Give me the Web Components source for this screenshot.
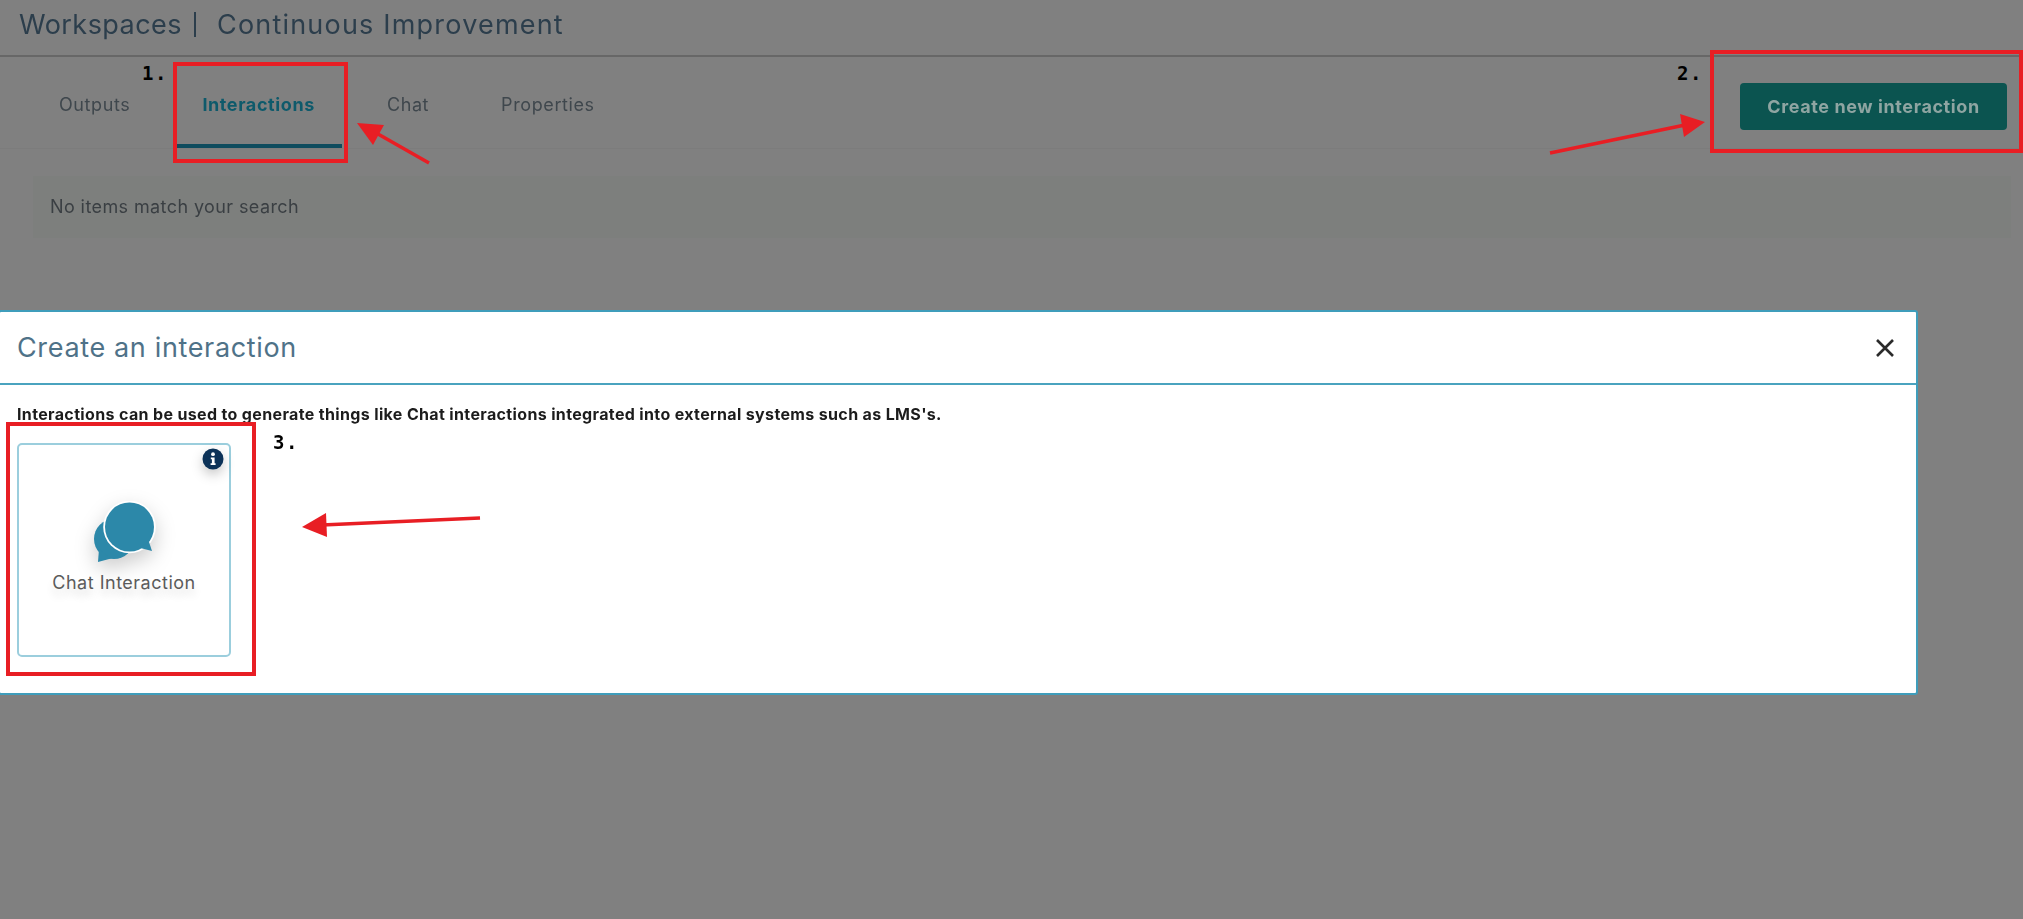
<!DOCTYPE html>
<html>
<head>
<meta charset="utf-8">
<title>Create an interaction</title>
<style>
  html, body { margin: 0; height: 100%; }
  body { background: #808080; overflow: hidden; font-family: Inter, "Open Sans", sans-serif; position: relative; }
</style>
</head>
<body>
<workspace-page>
  <workspace-header section="Workspaces" name="Continuous Improvement"></workspace-header>
  <tab-bar>
    <tab-item>Outputs</tab-item>
    <tab-item active>Interactions</tab-item>
    <tab-item>Chat</tab-item>
    <tab-item>Properties</tab-item>
    <create-button slot="action">Create new interaction</create-button>
  </tab-bar>
  <empty-panel>No items match your search</empty-panel>
</workspace-page>

<create-modal heading="Create an interaction">
  <span slot="intro">Interactions can be used to generate things like Chat interactions integrated into external systems such as LMS's.</span>
  <interaction-card>Chat Interaction</interaction-card>
</create-modal>

<mark-box label="1." x="173" y="62" w="175" h="101" lx="-35" ly="-5"></mark-box>
<mark-box label="2." x="1710" y="50" w="313" h="103" lx="-37" ly="7"></mark-box>
<mark-box label="3." x="6" y="422" w="250" h="254" lx="263" ly="4"></mark-box>
<mark-arrows></mark-arrows>

<script>
class WorkspacePage extends HTMLElement {
   constructor() {
      super();
      this.attachShadow({mode: 'open'});
      this.shadowRoot.innerHTML = `
      <style>
         :host { display: flex; flex-direction: column; filter: blur(.5px); }
      </style>
      <slot></slot>`;
   }
}
customElements.define('workspace-page', WorkspacePage);

class WorkspaceHeader extends HTMLElement {
   constructor() {
      super();
      this.attachShadow({mode: 'open'});
      this.shadowRoot.innerHTML = `
      <style>
         :host {
            display: flex; align-items: center; box-sizing: border-box;
            height: 57px; padding: 0 0 6px 19px;
            border-bottom: 2px solid #676767;
            font-size: 27px; color: #2c3e4c;
         }
         .section { letter-spacing: .45px; }
         .bar { width: 2px; height: 25px; margin: 0 21px 0 12px; background: #2c3e4c; }
         .name { letter-spacing: 1.2px; }
      </style>
      <span class="section">${this.getAttribute('section')}</span>
      <span class="bar"></span>
      <span class="name">${this.getAttribute('name')}</span>`;
   }
}
customElements.define('workspace-header', WorkspaceHeader);

class TabBar extends HTMLElement {
   constructor() {
      super();
      this.attachShadow({mode: 'open'});
      this.shadowRoot.innerHTML = `
      <style>
         :host {
            display: flex; box-sizing: border-box; height: 92px;
            padding: 0 16px 0 32px; gap: 18px;
            border-bottom: 1px solid #7c7c7c;
         }
         .action { margin-left: auto; padding-top: 26px; }
      </style>
      <slot></slot>
      <div class="action"><slot name="action"></slot></div>`;
   }
}
customElements.define('tab-bar', TabBar);

class TabItem extends HTMLElement {
   constructor() {
      super();
      this.attachShadow({mode: 'open'});
      this.shadowRoot.innerHTML = `
      <style>
         :host {
            display: block; box-sizing: border-box; height: 91px;
            padding: 38px 27px 0; line-height: 20px;
            font-size: 18px; letter-spacing: .6px; color: #3f474d; border-bottom: 4px solid transparent;
         }
         :host([active]) { color: #0e5a6b; font-weight: 700; border-bottom-color: #0f4c5e; }
      </style>
      <slot></slot>`;
   }
}
customElements.define('tab-item', TabItem);

class CreateButton extends HTMLElement {
   constructor() {
      super();
      this.attachShadow({mode: 'open'});
      this.shadowRoot.innerHTML = `
      <style>
         :host {
            display: flex; align-items: center; justify-content: center;
            width: 267px; height: 47px; border-radius: 4px;
            background: #0b5450; color: #8fa5a2;
            font-size: 18px; font-weight: 700; letter-spacing: .6px;
         }
      </style>
      <slot></slot>`;
   }
}
customElements.define('create-button', CreateButton);

class EmptyPanel extends HTMLElement {
   constructor() {
      super();
      this.attachShadow({mode: 'open'});
      this.shadowRoot.innerHTML = `
      <style>
         :host {
            display: flex; align-items: center; box-sizing: border-box;
            height: 62px; margin: 27px 12px 0 33px; padding: 0 17px 2px;
            background: #7d7f7d; color: #3a3f43; font-size: 18px; letter-spacing: .4px;
         }
      </style>
      <slot></slot>`;
   }
}
customElements.define('empty-panel', EmptyPanel);

class CreateModal extends HTMLElement {
   constructor() {
      super();
      this.attachShadow({mode: 'open'});
      this.shadowRoot.innerHTML = `
      <style>
         :host {
            position: absolute; left: -2px; top: 310px; width: 1920px; height: 385px;
            box-sizing: border-box; display: flex; flex-direction: column;
            background: #fff; border: 2px solid #3f9dbb; border-radius: 3px;
         }
         header {
            display: flex; align-items: center; justify-content: space-between;
            height: 73px; box-sizing: border-box; padding: 0 21px 0 17px; flex: none;
            border-bottom: 2px solid #4aa3bf;
         }
         h2 { margin: 0; font-size: 27px; font-weight: 400; letter-spacing: .65px; color: #4f7288; }
         svg { display: block; }
         .body { padding: 20px 17px 0; filter: blur(.3px); }
         .intro { font-size: 16px; font-weight: 700; letter-spacing: .35px; line-height: 18px; color: #1c1c1c; margin-bottom: 20px; white-space: nowrap; }
      </style>
      <header>
         <h2></h2>
         <svg width="20" height="20" viewBox="0 0 20 20" fill="none" stroke="#2b2b2b" stroke-width="2.6">
            <path d="M2 2 L18 18 M18 2 L2 18"/>
         </svg>
      </header>
      <div class="body">
         <div class="intro"><slot name="intro"></slot></div>
         <slot></slot>
      </div>`;
      this.shadowRoot.querySelector('h2').textContent = this.getAttribute('heading');
   }
}
customElements.define('create-modal', CreateModal);

class InteractionCard extends HTMLElement {
   constructor() {
      super();
      this.attachShadow({mode: 'open'});
      this.shadowRoot.innerHTML = `
      <style>
         :host {
            display: flex; flex-direction: column; align-items: center;
            position: relative; box-sizing: border-box;
            width: 214px; height: 214px; padding-top: 56px;
            border: 2px solid #9bcedd; border-radius: 5px;
            background: #fff; color: #5b5b5b; font-size: 18px; letter-spacing: .5px;
         }
         .info { position: absolute; top: 3px; right: 5px; filter: drop-shadow(0 5px 6px rgba(0,0,0,.22)); }
         .icon { display: block; margin: 0 0 5px -1px; filter: drop-shadow(0 8px 10px rgba(0,0,0,.2)); }
         .label { line-height: 22px; text-shadow: 0 7px 9px rgba(0,0,0,.14); }
         svg { display: block; }
      </style>
      <svg class="info" width="22" height="22" viewBox="0 0 22 22">
         <circle cx="11" cy="11" r="10.5" fill="#0c3258"/>
         <circle cx="11" cy="6.2" r="1.9" fill="#fff"/>
         <path d="M8.8 9.4h3.8v5.8h1v1.9H8.6v-1.9h1.3v-3.9H8.8z" fill="#fff"/>
      </svg>
      <svg class="icon" width="66" height="66" viewBox="0 0 66 66">
         <circle cx="23" cy="38" r="20" fill="#2c88a9"/>
         <polygon points="8,48 7,61 20,57.5" fill="#2c88a9"/>
         <circle cx="38.5" cy="26" r="26.3" fill="#fff"/>
         <circle cx="38.5" cy="26" r="24.5" fill="#2c88a9"/>
         <polygon points="57.7,40 61,50 48.3,46.7" fill="#2c88a9"/>
      </svg>
      <div class="label"><slot></slot></div>`;
   }
}
customElements.define('interaction-card', InteractionCard);

class MarkBox extends HTMLElement {
   constructor() {
      super();
      this.attachShadow({mode: 'open'});
      const a = n => this.getAttribute(n);
      this.shadowRoot.innerHTML = `
      <style>
         :host {
            position: absolute; box-sizing: border-box; display: block;
            left: ${a('x')}px; top: ${a('y')}px; width: ${a('w')}px; height: ${a('h')}px;
            border: 4px solid #e81e24; pointer-events: none;
         }
         span {
            position: absolute; left: ${a('lx')}px; top: ${a('ly')}px;
            font: 700 19px "DejaVu Sans Mono", monospace; line-height: 24px; letter-spacing: 1.5px; color: #000;
         }
      </style>
      <span>${a('label')}</span>`;
   }
}
customElements.define('mark-box', MarkBox);

class MarkArrows extends HTMLElement {
   constructor() {
      super();
      this.attachShadow({mode: 'open'});
      const arrow = (line, head) => `
         <line x1="${line[0]}" y1="${line[1]}" x2="${line[2]}" y2="${line[3]}" stroke="#e81e24" stroke-width="3.6"/>
         <polygon points="${head}" fill="#e81e24"/>`;
      this.shadowRoot.innerHTML = `
      <style>
         :host { position: absolute; inset: 0; display: block; pointer-events: none; }
         svg { display: block; }
      </style>
      <svg width="2023" height="919" viewBox="0 0 2023 919">
         ${arrow([429, 163, 378, 134], '357,123 384,125 373,145')}
         ${arrow([1550, 153, 1685, 125], '1705,122 1680,114 1684,137')}
         ${arrow([480, 518, 322, 525], '302,527 326,513 327,537')}
      </svg>`;
   }
}
customElements.define('mark-arrows', MarkArrows);
</script>
</body>
</html>
